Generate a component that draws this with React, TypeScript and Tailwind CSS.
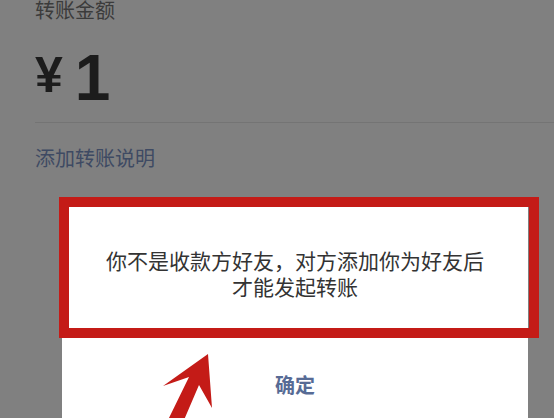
import React from 'react';

const cjk = '"Noto Sans CJK SC", "Noto Sans", sans-serif';

export default function App() {
  return (
    <div className="relative w-[554px] h-[418px] overflow-hidden bg-[#808080]" style={{ fontFamily: cjk }}>
      {/* transfer form under the overlay */}
      <div className="pl-[35px]">
        <div className="-mt-[2px] text-[20px] leading-[24px] text-[#3b3b3b]">转账金额</div>
        <div className="mt-[26px] flex items-end h-[56px]" style={{ fontFamily: '"Liberation Sans", Arial, sans-serif' }}>
          <span className="text-[50px] leading-none font-bold text-[#1c1c1c] mb-[4px]">¥</span>
          <span className="ml-[12px] text-[64px] leading-[52px] text-[#1c1c1c] font-bold">1</span>
        </div>
        <div className="mt-[18px] h-px bg-[#747474]" />
        <div className="mt-[22px] text-[20px] leading-[26px] text-[#3e4a63]">添加转账说明</div>
      </div>

      {/* dialog */}
      <div className="absolute left-[62px] top-[200px] w-[466px] h-[240px] bg-white">
        <div className="pt-[47px] text-center text-[21px] leading-[26px] text-[#333333]">
          <p>你不是收款方好友，对方添加你为好友后</p>
          <p>才能发起转账</p>
        </div>
        <div className="mt-[74px] text-center text-[20px] leading-[24px] font-bold text-[#576b95]">确定</div>
      </div>

      {/* highlight box */}
      <div className="absolute left-[59px] top-[197px] w-[480px] h-[141px] border-[10px] border-[#c41b17]" />

      {/* arrow */}
      <svg className="absolute left-0 top-0" width="554" height="418" viewBox="0 0 554 418">
        <polygon
          points="208,354 163,386 189,377 168,420 184,420 199,385 212,408"
          fill="#c41b17"
        />
      </svg>
    </div>
  );
}
